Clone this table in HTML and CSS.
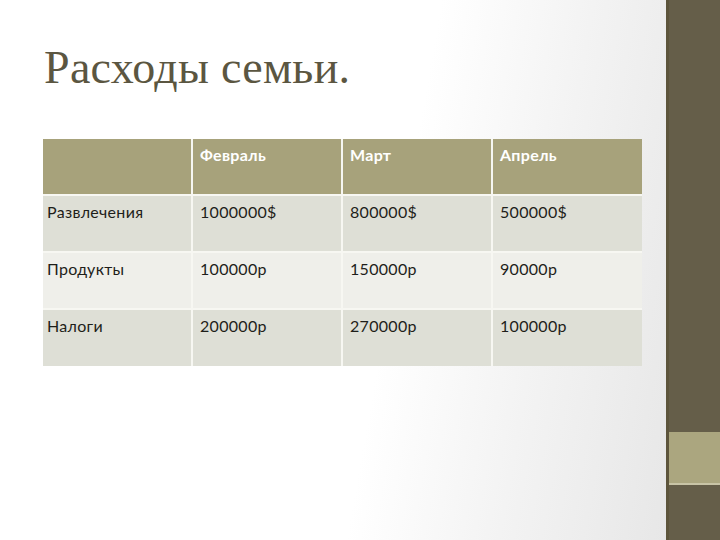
FILE: index.html
```html
<!DOCTYPE html>
<html lang="ru">
<head>
<meta charset="utf-8">
<title>Расходы семьи.</title>
<link rel="stylesheet" href="styles.css">
</head>
<body>
<div class="slide">
  <main class="content">
    <h1 class="title">Расходы семьи.</h1>
    <table class="grid">
      <thead>
        <tr><th></th><th>Февраль</th><th>Март</th><th>Апрель</th></tr>
      </thead>
      <tbody>
        <tr class="odd"><td>Развлечения</td><td>1000000$</td><td>800000$</td><td>500000$</td></tr>
        <tr class="even"><td>Продукты</td><td>100000р</td><td>150000р</td><td>90000р</td></tr>
        <tr class="odd"><td>Налоги</td><td>200000р</td><td>270000р</td><td>100000р</td></tr>
      </tbody>
    </table>
  </main>
  <aside class="side">
    <div class="side-top"></div>
    <div class="side-band"></div>
    <div class="side-bottom"></div>
  </aside>
</div>
</body>
</html>
```

FILE: styles.css
```css
html, body {
  margin: 0;
  padding: 0;
}
.slide {
  width: 720px;
  height: 540px;
  display: flex;
  overflow: hidden;
}
.content {
  width: 666px;
  height: 540px;
  box-sizing: border-box;
  padding: 42px 0 0 43px;
  background: linear-gradient(100deg, #ffffff 0%, #ffffff 58%, #f3f3f3 78%, #e7e7e7 100%);
}
.title {
  margin: 0 0 0 1px;
  font-family: "Liberation Serif", "Times New Roman", serif;
  font-weight: normal;
  font-size: 46px;
  line-height: 52px;
  color: #5b5641;
  letter-spacing: 0.3px;
}
.grid {
  margin-top: 45px;
  border-collapse: collapse;
  font-family: Lato, "Liberation Sans", sans-serif;
  font-size: 16px;
  letter-spacing: 0.3px;
}
.grid th, .grid td {
  width: 150px;
  height: 57px;
  box-sizing: border-box;
  padding: 6px 7px 0 7px;
  text-align: left;
  vertical-align: top;
  border: 2px solid #f7f7f2;
}
.grid tr > :first-child { width: 149px; padding-left: 4px; }
.grid th {
  background: #a7a27b;
  color: #ffffff;
  font-weight: bold;
  height: 56px;
  border-top: none;
}
.grid td { color: #1e1e1a; }
.grid tr.odd td { background: #dedfd6; }
.grid tr.even td { background: #efefea; }
.grid tr > :first-child { border-left: none; }
.grid tr > :last-child { border-right: none; }
.grid tbody tr:last-child td { border-bottom: none; }
.side {
  width: 54px;
  display: flex;
  flex-direction: column;
  border-left: 3px solid #5d553c;
  box-sizing: border-box;
}
.side-top { height: 432px; background: #655e49; }
.side-band { height: 51px; background: #aba67f; border-bottom: 2px solid #c8c4a6; }
.side-bottom { flex: 1; background: #655e49; }
```
